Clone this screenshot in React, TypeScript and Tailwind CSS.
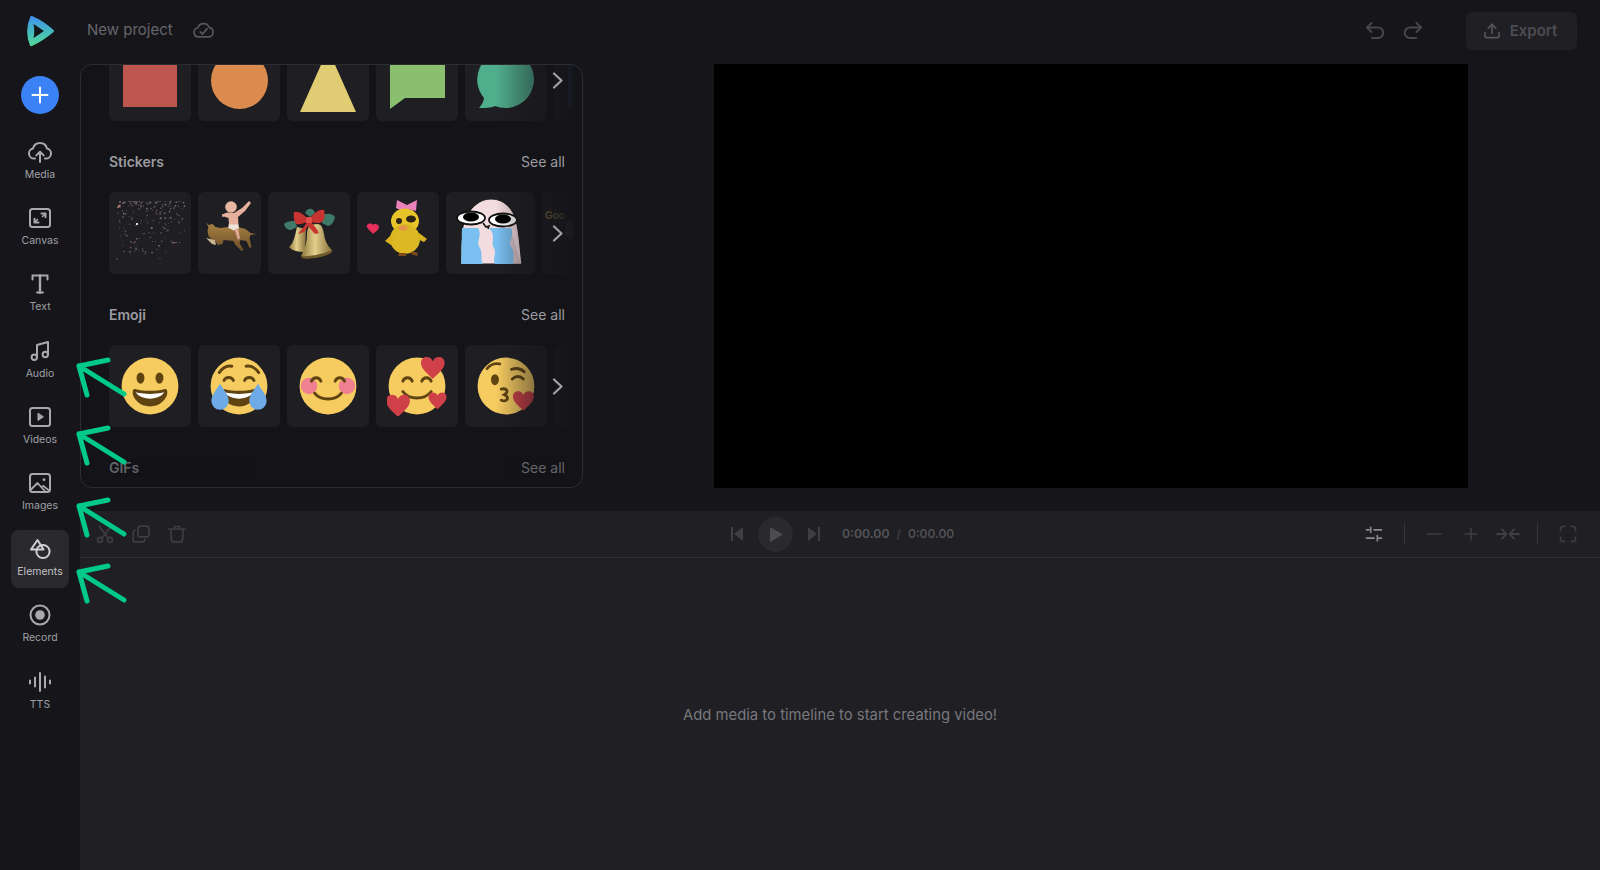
import React from "react";

const font = { fontFamily: "Inter, 'Liberation Sans', sans-serif" };

function Ic({ children, size = 24, color = "#a9a9ad", sw = 2 }: { children: React.ReactNode; size?: number; color?: string; sw?: number }) {
  return (
    <svg width={size} height={size} viewBox="0 0 24 24" fill="none" stroke={color} strokeWidth={sw} strokeLinecap="round" strokeLinejoin="round">
      {children}
    </svg>
  );
}

const navIcons: Record<string, React.ReactNode> = {
  Media: (
    <>
      <path d="M7 18.500H6A5 5 0 0 1 5 8.600 7.200 7.200 0 0 1 19 8.600a5 5 0 0 1-1 9.900h-1" />
      <path d="M12 22V12" />
      <path d="M8.300 15.400 12 11.700l3.700 3.700" />
    </>
  ),
  Canvas: (
    <>
      <rect x="2" y="3" width="20" height="18" rx="2.500" />
      <path d="M13.500 7.500h4v3.800" />
      <path d="M10.500 16.500h-4v-3.800" />
      <path d="M17.300 7.800l-2.800 2.700M6.700 16.200l2.800-2.700" strokeWidth="1.600" />
    </>
  ),
  Text: (
    <>
      <path d="M4.500 7.500V3.500h15v4" />
      <path d="M12 3.500v17" strokeWidth="2.400" />
      <path d="M9 20.500h6" />
    </>
  ),
  Audio: (
    <>
      <path d="M9 18V6l11-3v12.500" />
      <circle cx="6.300" cy="18.300" r="2.700" />
      <circle cx="17.300" cy="15.500" r="2.700" />
    </>
  ),
  Videos: (
    <>
      <rect x="2" y="3" width="20" height="18" rx="2.500" />
      <path d="M10 8.500v7l5.200-3.500z" fill="#a9a9ad" strokeWidth="1" />
    </>
  ),
  Images: (
    <>
      <rect x="2" y="3" width="20" height="18" rx="2.500" />
      <circle cx="16" cy="8.700" r="1.400" fill="#a9a9ad" stroke="none" />
      <path d="M3 18.500 9.500 12l7.800 8.500M13.500 16.500l1.800-1.600 5.700 4.600" strokeWidth="1.800" />
    </>
  ),
  Elements: (
    <>
      <path d="M9.500 3 3 12.500h12.500z" stroke="#d0d0d3" />
      <circle cx="15" cy="14.500" r="6.600" stroke="#d0d0d3" />
    </>
  ),
  Record: (
    <>
      <circle cx="12" cy="12" r="9.500" />
      <circle cx="12" cy="12" r="4.800" fill="#a9a9ad" stroke="none" />
    </>
  ),
  TTS: (
    <>
      <path d="M2 10.500v3M7 7.500v9M12 3v18M17 6.500v11M22 10.500v3" />
    </>
  ),
};

const navItems = ["Media", "Canvas", "Text", "Audio", "Videos", "Images", "Elements", "Record", "TTS"];

function Logo() {
  return (
    <svg width="30" height="32" viewBox="0 0 30 32" className="mb-[2px]">
      <defs>
        <linearGradient id="lg" x1="0.4" y1="0" x2="0.4" y2="1">
          <stop offset="0" stopColor="#3f8ff0" />
          <stop offset="0.5" stopColor="#45b8c0" />
          <stop offset="1" stopColor="#55d898" />
        </linearGradient>
      </defs>
      <path
        fillRule="evenodd"
        fill="url(#lg)"
        d="M5.500 1.200Q6 .5 7 1 18 5.500 28.500 15 29.500 16 28.500 17 18 26 7 31 5.500 31.500 5 30.500-1 16 5.500 1.200ZM8.500 9Q10 16 8.500 23L19 16Z"
      />
    </svg>
  );
}

function Sidebar() {
  return (
    <aside className="flex w-20 shrink-0 flex-col items-center bg-[#15151a]">
      <div className="flex h-16 w-full items-center justify-center">
        <Logo />
      </div>
      <button className="mt-3 flex h-[38px] w-[38px] items-center justify-center rounded-full bg-[#3b82f6]">
        <svg width="20" height="20" viewBox="0 0 20 20" stroke="#fff" strokeWidth="2" strokeLinecap="round">
          <path d="M10 2.500v15M2.500 10h15" />
        </svg>
      </button>
      <nav className="mt-[19px] flex flex-col gap-2">
        {navItems.map((n) => (
          <div
            key={n}
            className={`flex h-[58.2px] w-[58px] flex-col items-center rounded-lg pt-[7px] ${n === "Elements" ? "bg-[#29292e]" : ""}`}
          >
            <Ic>{navIcons[n]}</Ic>
            <span className={`mt-[4px] text-[10.5px] leading-[14px] ${n === "Elements" ? "text-[#c4c4c8]" : "text-[#a0a0a5]"}`}>{n}</span>
          </div>
        ))}
      </nav>
    </aside>
  );
}

function Header() {
  return (
    <header className="flex h-16 items-center justify-between pb-[2px] pl-[7px] pr-[23px]">
      <div className="-mt-[2px] flex items-center gap-[19px]">
        <span className="text-[15px] text-[#66666b]">New project</span>
        <svg width="22" height="22" viewBox="0 0 24 24" fill="none" stroke="#56565b" strokeWidth="1.800" strokeLinecap="round" strokeLinejoin="round">
          <path d="M7 19.500a5 5 0 0 1-.6-9.900A6.500 6.500 0 0 1 18.700 9.200a5.200 5.200 0 0 1-.7 10.300z" />
          <path d="m9 14 2.500 2.500 5-6" />
        </svg>
      </div>
      <div className="flex items-center">
        <button className="mr-[14px]">
          <Ic color="#46464b">
            <path d="M4 8.500h11a5 5 0 0 1 0 10.500H9" />
            <path d="M8.500 4 4 8.500 8.500 13" />
          </Ic>
        </button>
        <button className="mr-[41px]">
          <Ic color="#46464b">
            <path d="M20 8.500H9A5 5 0 0 0 9 19h6" />
            <path d="M15.500 4 20 8.500 15.500 13" />
          </Ic>
        </button>
        <button className="flex h-[38px] w-[111px] items-center justify-center gap-2 rounded-md bg-[#1f1f24] pr-1 text-[15px] font-semibold text-[#4d4d52]">
          <Ic color="#55555a" size={20}>
            <path d="M12 15V4" />
            <path d="M7.500 8.500 12 4l4.500 4.500" />
            <path d="M3.500 14v3a3 3 0 0 0 3 3h11a3 3 0 0 0 3-3v-3" />
          </Ic>
          Export
        </button>
      </div>
    </header>
  );
}

function Tile({ w = 82, children, start }: { w?: number; children?: React.ReactNode; start?: boolean }) {
  return (
    <div
      className={`flex h-[82px] shrink-0 items-center overflow-hidden rounded-md bg-[#1e1e23] ${start ? "justify-start" : "justify-center"}`}
      style={{ width: w }}
    >
      {children}
    </div>
  );
}

function Carousel({ children }: { children: React.ReactNode }) {
  return (
    <div className="relative w-[465px] overflow-hidden">
      <div className="flex gap-[7px]">{children}</div>
      <div className="absolute inset-y-0 right-0 w-[78px] bg-gradient-to-r from-[#13131800] to-[#131318f0]" />
      <svg className="absolute right-[10px] top-[33px]" width="12" height="17" viewBox="0 0 12 17" fill="none" stroke="#a2a2a6" strokeWidth="2.200" strokeLinecap="round" strokeLinejoin="round">
        <path d="M2 1.500 9.500 8.500 2 15.500" />
      </svg>
    </div>
  );
}

function SectionHead({ title }: { title: string }) {
  return (
    <div className="mb-5 mt-[31px] flex h-5 items-center justify-between pr-[17px] text-sm leading-5">
      <span className="font-semibold text-[#9c9ca0]">{title}</span>
      <span className="text-[#9c9ca0]">See all</span>
    </div>
  );
}

/* emoji */
const F = "#f6cb60";
const M = "#5f4412";
const Face = ({ children }: { children: React.ReactNode }) => (
  <svg width="60" height="60" viewBox="-1 -1 38 38">
    <circle cx="18" cy="18" r="18" fill={F} />
    {children}
  </svg>
);
const Mouth = () => (
  <>
    <path d="M18 21c-3.600 0-6-.4-9-1-.7-.1-2 0-2 2 0 4 4.600 9 11 9s11-5 11-9c0-2-1.300-2.100-2-2-3 .6-5.400 1-9 1z" fill={M} />
    <path d="M9 22s3 1 9 1 9-1 9-1-2 4-9 4-9-4-9-4z" fill="#fff" />
  </>
);
const Heart = ({ x, y, s }: { x: number; y: number; s: number }) => (
  <path transform={`translate(${x} ${y}) scale(${s})`} d="M0 -3C-1-6-6-6-6-2c0 3 4 6 6 8 2-2 6-5 6-8 0-4-5-4-6-1z" fill="#cf4048" />
);
const Arc = ({ d }: { d: string }) => <path d={d} fill="none" stroke={M} strokeWidth="1.800" strokeLinecap="round" />;

const emojis = [
  <Face key="a">
    <ellipse cx="12" cy="13" rx="2.500" ry="3.600" fill={M} />
    <ellipse cx="24" cy="13" rx="2.500" ry="3.600" fill={M} />
    <Mouth />
  </Face>,
  <Face key="b">
    <Mouth />
    <Arc d="M5.500 9.500C8 6 11 5 13.500 5.500M30.500 9.500C28 6 25 5 22.500 5.500" />
    <Arc d="M8.500 14.500c1-2.500 5-2.500 6 0M21.500 14.500c1-2.500 5-2.500 6 0" />
    <path d="M6 16.500c-2 3.500-5.500 7-5.500 11a5.500 5.500 0 0 0 11 0c0-4-3.500-7.500-5.500-11zM30 16.500c-2 3.500-5.500 7-5.500 11a5.500 5.500 0 0 0 11 0c0-4-3.500-7.500-5.500-11z" fill="#6eaae6" />
  </Face>,
  <Face key="c">
    <circle cx="6" cy="18" r="5.200" fill="#ee8092" />
    <circle cx="30" cy="18" r="5.200" fill="#ee8092" />
    <Arc d="M7.500 15c1-3 5-3 6 0M22.500 15c1-3 5-3 6 0" />
    <Arc d="M9.500 22.500c4 5 13 5 17 0" />
  </Face>,
  <Face key="d">
    <Arc d="M9 15c1-3 5-3 6 0M21 15c1-3 5-3 6 0" />
    <Arc d="M9 21.500c4 5.500 14 5.500 18 0" />
    <Heart x={28} y={6} s={1.250} />
    <Heart x={6} y={30} s={1.250} />
    <Heart x={31} y={27} s={0.950} />
  </Face>,
  <Face key="e">
    <ellipse cx="11" cy="14" rx="2.500" ry="3.500" fill={M} />
    <Arc d="M6 7c2-2.500 5-3.500 8-3M22 13.500c2-2 5-2 7 0M21.500 7.500c3-1 6-.5 8 1.500" />
    <Arc d="M15 20c3-1 5.500 1.500 2 3.500 3.500 1.500 2 5-2 3.500" />
    <Heart x={29} y={27} s={1.100} />
  </Face>,
];

function Speckle() {
  const dots: React.ReactNode[] = [];
  let s = 11;
  const r = () => {
    s = (s * 16807) % 2147483647;
    return (s % 1000) / 1000;
  };
  const cols = ["#8f8480", "#7a6a66", "#6f6f6f", "#9a9a9a", "#85605e"];
  for (let i = 0; i < 190; i++) {
    const x = 7 + r() * 68;
    const k = r();
    const y = 9 + k * k * 58;
    const ry = x > 60 ? Math.min(y, 50) : y;
    const size = r() > 0.6 ? 1.500 : 1;
    dots.push(<rect key={i} x={x} y={ry} width={size} height={size} fill={cols[i % 5]} opacity={0.7} />);
  }
  return (
    <svg width="82" height="82" viewBox="0 0 82 82">
      {dots}
      <rect x="27" y="31" width="2" height="2" fill="#ddd" />
      <rect x="9" y="13" width="2.500" height="2.500" fill="#a9706a" />
    </svg>
  );
}

function CatBaby() {
  return (
    <svg width="63" height="82" viewBox="0 0 63 82">
      <defs>
        <linearGradient id="cat" x1="0" y1="0" x2="0" y2="1">
          <stop offset="0" stopColor="#a98345" />
          <stop offset="1" stopColor="#6e4e28" />
        </linearGradient>
      </defs>
      <path d="M8 30l2.500 3 4-1 3 3 5 1 7-1 10 0 8 2 5 4 6 1-6 1-1 3 2 9-2 1-3-7-6-1-1 3 4 7-2 1-6-6-2-4-10-1-1 4-5 1-2-4-4-2-3-3-1-5 1-4z" fill="url(#cat)" />
      <path d="M8 46l6 6 4 1-1-5z" fill="#c9b48e" />
      <path d="M36 21 44 16 51 9 53 11 47 19 40 25 40.500 33 31 33 30.500 26 26 24.500 24 25 24 22.500 29 20.500Z" fill="#e6b09c" />
      <circle cx="33" cy="15" r="5.800" fill="#e9b6a2" />
      <path d="M30.500 32.500h10l.5 4-5 2-5.500-2.500z" fill="#ece5dc" />
      <path d="M36.500 37.500l3.500-1.500 2 10-2 2z" fill="#dfa794" />
    </svg>
  );
}

function Bells() {
  return (
    <svg width="82" height="82" viewBox="0 0 82 82">
      <defs>
        <linearGradient id="gold" x1="0" y1="0" x2="1" y2="0">
          <stop offset="0" stopColor="#8d7539" />
          <stop offset="0.45" stopColor="#e3d08d" />
          <stop offset="1" stopColor="#86703a" />
        </linearGradient>
      </defs>
      <path d="M21 55c5-4 6-12 8-20l9 2-1 23c-6 0-13-1-16-5z" fill="url(#gold)" />
      <path d="M42 33l7-1c5 0 6 5 7 10 1 7 3 11 8 16 0 3-5 5-13 7-8 1-15 1-18-1 4-7 6-14 6-22 0-3 1-7 3-9z" fill="url(#gold)" />
      <path d="M33 64c8 1 23-2 31-6l0 2c-6 5-22 8-30 6z" fill="#6f5a2c" />
      <path d="M16 32c3-3 7-3 11-3l2 6-6 3c-3 0-6-2-7-6zM55 23c4-2 9-2 12 2-1 5-3 8-7 9l-6-3zM37 21c2-5 8-6 10 0l-5 4z" fill="#3f7a68" />
      <path d="M40 27c-4-4-9-8-14-7-1 4 0 9 2 12 4 1 8-1 11-2-2 4-6 8-9 12l6-2 4-6 7 8 4-1c-2-4-5-8-8-11 4 1 9 2 12-1 2-3 2-8 1-11-5-1-9 3-13 7z" fill="#c8342f" />
      <rect x="38" y="25" width="6" height="6" rx="1.500" fill="#e3524a" />
    </svg>
  );
}

function Duck() {
  return (
    <svg width="82" height="72" viewBox="0 0 82 72">
      <path d="M16 28c-2-3-7-1-6 2 1 3 5 5 6 7 2-2 6-4 6-7 0-3-5-4-6-2z" fill="#e7305c" />
      <path d="M39 11l1-8 10 5 10-5-1 11-8-2-6 2z" fill="#e981ba" />
      <ellipse cx="48" cy="24" rx="14" ry="12.500" fill="#e7c52a" />
      <ellipse cx="48" cy="42" rx="15" ry="15" fill="#dcb824" />
      <path d="M28 44l6-6 3 3-3 7zM62 36l8 6-3 3-7-3z" fill="#d9b21f" />
      <ellipse cx="54" cy="22" rx="5" ry="3.500" fill="#2d2415" />
      <circle cx="42" cy="24" r="3" fill="#2d2415" />
      <ellipse cx="46" cy="31" rx="4.500" ry="2.500" fill="#e5914f" />
      <path d="M42 56l7 0 0 3-8 0zM55 54l6 2-1 3-6-2z" fill="#7c4a1b" />
    </svg>
  );
}

function Crying() {
  return (
    <svg width="76" height="70" viewBox="0 0 76 70">
      <path d="M8 66C8 50 7 36 11 24 16 8 28 1 38 1c13 0 22 9 25 21 4 15 4 30 6 44z" fill="#f3dcdf" stroke="#1a1a1a" strokeWidth="1.200" />
      <path d="M56 30c6 10 7 24 12 36h-8z" fill="#cfb6bb" opacity=".7" />
      <path d="M9 30h16c5 8-3 14 2 20 3 6 0 11 3 16H8z" fill="#79bff0" />
      <path d="M36 30h22c4 8-4 14 1 20 3 6 0 11 2 16H42c-3-5 2-11-1-16-4-6 3-12-5-20z" fill="#79bff0" />
      <ellipse cx="18" cy="20" rx="14" ry="6.500" fill="#fff" stroke="#111" strokeWidth="1.800" />
      <ellipse cx="50" cy="22" rx="14" ry="6.500" fill="#fff" stroke="#111" strokeWidth="1.800" />
      <ellipse cx="18" cy="19" rx="8" ry="4.500" fill="#000" />
      <ellipse cx="50" cy="21" rx="8" ry="4.500" fill="#000" />
      <path d="M30 25l3 4 3-1-1 3" fill="none" stroke="#111" strokeWidth="1.500" />
    </svg>
  );
}

function Panel() {
  return (
    <section className="h-[424px] w-[503px] shrink-0 overflow-hidden rounded-xl border border-[#2c2c31] bg-[#131318] pl-7">
      <div className="-mt-[26px]">
        <Carousel>
          <Tile>
            <div className="h-[54px] w-[54px] bg-[#bd564e]" />
          </Tile>
          <Tile>
            <div className="h-[57px] w-[57px] rounded-full bg-[#db8b4e]" />
          </Tile>
          <Tile>
            <svg width="58" height="64" viewBox="0 0 58 64" className="mb-[-2px]">
              <path d="M29 0 57 63H1z" fill="#e0cd73" />
            </svg>
          </Tile>
          <Tile>
            <svg width="56" height="60" viewBox="0 0 56 60" className="mb-[2px]">
              <path d="M1 5h55v44H16L1 60z" fill="#89bf6d" />
            </svg>
          </Tile>
          <Tile>
            <svg width="60" height="60" viewBox="0 0 60 60">
              <path d="M30 1a28.500 28.500 0 1 1-11 55C15 58 8 58 3 58c3-3 5-8 5-10A28.500 28.500 0 0 1 30 1z" fill="#4fae8c" />
            </svg>
          </Tile>
          <Tile>
            <div className="h-[54px] w-[54px] bg-[#35506b]" />
          </Tile>
        </Carousel>

        <SectionHead title="Stickers" />
        <Carousel>
          <Tile><Speckle /></Tile>
          <Tile w={63}><CatBaby /></Tile>
          <Tile><Bells /></Tile>
          <Tile><Duck /></Tile>
          <Tile w={89}><Crying /></Tile>
          <Tile start>
            <div className="-mt-[18px] flex flex-col items-start pl-[3px]">
              <span className="text-[10px] font-semibold leading-3 text-[#b59b4a]">Goo</span>
              <div className="ml-5 h-[18px] w-[14px] rounded-full bg-[#5a4a48]" />
            </div>
          </Tile>
        </Carousel>

        <SectionHead title="Emoji" />
        <Carousel>
          {emojis.map((e, i) => (
            <Tile key={i}>{e}</Tile>
          ))}
          <Tile>
            <div className="h-[56px] w-[40px] rounded bg-[#5c2a30]" />
          </Tile>
        </Carousel>

        <div className="opacity-60">
          <SectionHead title="GIFs" />
        </div>
      </div>
    </section>
  );
}

function Toolbar() {
  const dim = "#3e3e43";
  return (
    <div className="flex h-[47px] items-center border-b border-[#2f2f34] bg-[#1f1f24]">
      <div className="flex w-[690px] shrink-0 items-center">
        <div className="flex w-[35px] justify-end">
          <Ic color={dim} size={20}>
            <circle cx="6" cy="19" r="3" />
            <circle cx="18" cy="19" r="3" />
            <path d="M8 17 19 3M16 17 5 3" />
          </Ic>
        </div>
        <div className="ml-4">
          <Ic color={dim} size={20}>
            <rect x="8.500" y="2.500" width="13" height="13" rx="3" />
            <path d="M5.500 7.500A3 3 0 0 0 2.500 10.500v8a3 3 0 0 0 3 3h8a3 3 0 0 0 3-3" />
          </Ic>
        </div>
        <div className="ml-4">
          <Ic color={dim} size={20}>
            <path d="M2 6h20M9 6V3h6v3M4.500 6l.8 13a3 3 0 0 0 3 2.500h7.400a3 3 0 0 0 3-2.500L19.500 6" />
          </Ic>
        </div>
      </div>
      <div className="flex items-center">
        <svg width="12" height="14" viewBox="0 0 12 14" fill={dim} className="ml-[-39px]">
          <path d="M0 0h2v14H0zM12 0v14L3 7z" />
        </svg>
        <div className="ml-[15px] flex h-[35px] w-[35px] items-center justify-center rounded-full bg-[#29292e]">
          <svg width="14" height="15" viewBox="0 0 14 15" fill="#4c4c51">
            <path d="M1 0 14 7.500 1 15z" />
          </svg>
        </div>
        <svg width="12" height="14" viewBox="0 0 12 14" fill={dim} className="ml-[15px]">
          <path d="M12 0h-2v14h2zM0 0v14l9-7z" />
        </svg>
        <div className="ml-[22px] flex items-center gap-[7px] pt-px text-[12.25px] text-[#55555a]">
          <span className="font-semibold">0:00.00</span>
          <span className="text-[#47474c]">/</span>
          <span className="font-medium">0:00.00</span>
        </div>
      </div>
      <div className="ml-auto flex items-center pr-[22px]">
        <Ic color="#8a8a8e" size={20}>
          <path d="M12 7h9M3 7h3M8 4v6" />
          <path d="M3 17h9M18 17h3M16 14v6" />
        </Ic>
        <div className="mx-5 h-[22px] w-px bg-[#35353a]" />
        <Ic color={dim} size={18}>
          <path d="M3 12h18" />
        </Ic>
        <div className="ml-[19px]">
          <Ic color={dim} size={18}>
            <path d="M12 4v16M4 12h16" />
          </Ic>
        </div>
        <div className="ml-[16px]">
          <svg width="24" height="14" viewBox="0 0 24 14" fill="none" stroke={dim} strokeWidth="1.800" strokeLinecap="round" strokeLinejoin="round">
            <path d="M1 7h9M6 2.500 10.500 7 6 11.500M23 7h-9M18 2.500 13.500 7l4.500 4.500" />
          </svg>
        </div>
        <div className="ml-[17px] mr-[14px] h-[22px] w-px bg-[#35353a]" />
        <div className="ml-[6px]">
          <Ic color={dim} size={20}>
            <path d="M3 8V6a3 3 0 0 1 3-3h2M16 3h2a3 3 0 0 1 3 3v2M21 16v2a3 3 0 0 1-3 3h-2M8 21H6a3 3 0 0 1-3-3v-2" />
          </Ic>
        </div>
      </div>
    </div>
  );
}

function Arrows() {
  const list = [366, 434, 506, 572];
  return (
    <svg className="pointer-events-none absolute left-0 top-0" width="140" height="870" fill="none" stroke="#00c98a" strokeWidth="5" strokeLinecap="round" strokeLinejoin="round">
      {list.map((y) => (
        <path key={y} d={`M124 ${y + 28}L79 ${y}M108 ${y - 6}L79 ${y}L87 ${y + 29}`} />
      ))}
    </svg>
  );
}

export default function App() {
  return (
    <div className="relative flex h-[870px] w-[1600px] overflow-hidden bg-[#15151a]" style={font}>
      <Sidebar />
      <div className="flex min-w-0 flex-1 flex-col">
        <Header />
        <div className="flex h-[424px]">
          <Panel />
          <div className="flex flex-1 justify-center pr-[2px]">
            <div className="h-[424px] w-[754px] bg-black" />
          </div>
        </div>
        <div className="mt-[23px]">
          <Toolbar />
        </div>
        <div className="flex flex-1 items-center justify-center bg-[#1f1f24] pt-[2px] text-[14.85px] text-[#77777c]">
          Add media to timeline to start creating video!
        </div>
      </div>
      <Arrows />
    </div>
  );
}
